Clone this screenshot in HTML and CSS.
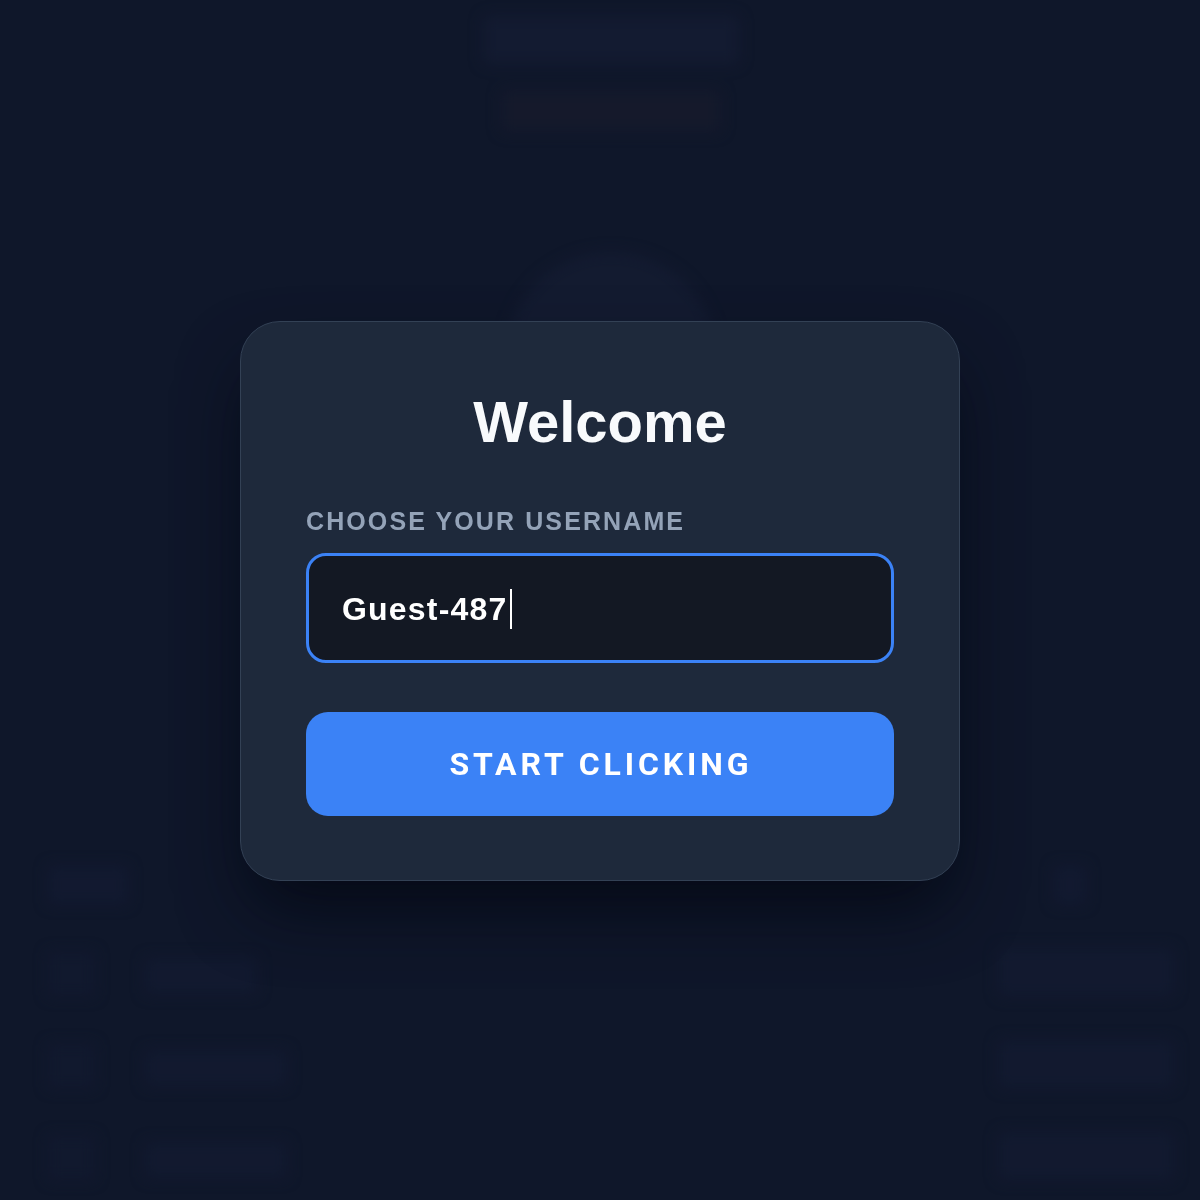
FILE: index.html
```html
<!DOCTYPE html>
<html lang="en">
<head>
<meta charset="utf-8">
<title>Welcome</title>
<link rel="stylesheet" href="styles.css">
</head>
<body>
  <div class="app" aria-hidden="true">
    <header class="app-header">
      <div class="bg-title"></div>
      <div class="bg-score"></div>
      <div class="bg-orb"></div>
    </header>
    <section class="bg-panels">
      <div class="panel panel-left">
        <div class="panel-head"></div>
        <div class="row"><div class="box"></div><div class="bar"></div></div>
        <div class="row"><div class="box"></div><div class="bar wide"></div></div>
        <div class="row"><div class="box"></div><div class="bar wide"></div></div>
      </div>
      <div class="panel panel-right">
        <div class="panel-head small"></div>
        <div class="rbar"></div>
        <div class="rbar"></div>
        <div class="rbar"></div>
      </div>
    </section>
  </div>

  <div class="overlay">
    <div class="card">
      <h1 class="title">Welcome</h1>
      <label class="label" for="username">CHOOSE YOUR USERNAME</label>
      <div class="field" id="username" role="textbox"><span class="value">Guest-487</span><span class="caret"></span></div>
      <button class="start" type="button">START CLICKING</button>
    </div>
  </div>
</body>
</html>
```
FILE: styles.css
```css
* { box-sizing: border-box; }

html, body {
  margin: 0;
  height: 100%;
}

body {
  background: #0f172a;
  font-family: "Liberation Sans", Arial, sans-serif;
  overflow: hidden;
}

/* blurred game layer behind the dialog */
.app {
  height: 100vh;
  display: flex;
  flex-direction: column;
  padding: 16px 26px 20px 48px;
  filter: blur(7px);
}

.app-header {
  display: flex;
  flex-direction: column;
  align-items: center;
}

.bg-title {
  width: 256px;
  height: 48px;
  background: #151d34;
  border-radius: 6px;
}

.bg-score {
  width: 220px;
  height: 42px;
  margin-top: 26px;
  background: #171b2c;
  border-radius: 6px;
}

.bg-orb {
  width: 210px;
  height: 210px;
  margin-top: 120px;
  border-radius: 50%;
  background: #151d33;
}

.bg-panels {
  margin-top: auto;
  display: flex;
  justify-content: space-between;
}

.panel {
  display: flex;
  flex-direction: column;
}

.panel-left { width: 242px; gap: 48px; }

.panel-head {
  width: 80px;
  height: 38px;
  background: #131b33;
  border-radius: 4px;
}

.panel-head.small {
  width: 32px;
  margin-left: 56px;
}

.row {
  display: flex;
  gap: 50px;
  height: 44px;
}

.box {
  width: 47px;
  height: 44px;
  background: #121a30;
  border-radius: 4px;
}

.bar {
  width: 112px;
  height: 36px;
  margin-top: 6px;
  background: #131b32;
  border-radius: 4px;
}

.bar.wide { width: 142px; }

.panel-right { width: 176px; gap: 44px; }

.rbar {
  width: 176px;
  height: 48px;
  background: #131b32;
  border-radius: 6px;
}

/* dialog overlay */
.overlay {
  position: fixed;
  inset: 0;
  display: flex;
  align-items: center;
  justify-content: center;
  background: rgba(15, 23, 42, 0.3);
}

.card {
  width: 720px;
  padding: 64px 65px;
  background: #1e293b;
  border: 1px solid #334155;
  border-radius: 40px;
  box-shadow: 0 36px 70px -12px rgba(2, 6, 16, 0.8);
  display: flex;
  flex-direction: column;
  margin-top: 2px;
}

.title {
  margin: 0 0 48px;
  text-align: center;
  font-size: 58px;
  line-height: 1.25;
  font-weight: 700;
  color: #f8fafc;
}

.label {
  display: block;
  font-size: 25px;
  line-height: 30px;
  font-weight: 700;
  letter-spacing: 2.1px;
  color: #94a3b8;
  margin-bottom: 17px;
}

.field {
  height: 110px;
  border: 3px solid #3b82f6;
  border-radius: 20px;
  background: #131823;
  padding: 2px 33px 0;
  display: flex;
  align-items: center;
  color: #ffffff;
  font-size: 32px;
  font-weight: 700;
  letter-spacing: 1.2px;
}

.caret {
  width: 2px;
  height: 40px;
  background: #ffffff;
  margin-left: 2px;
}

.start {
  margin-top: 49px;
  height: 104px;
  border: 0;
  border-radius: 22px;
  background: #3b82f6;
  color: #ffffff;
  font-family: Roboto, "Liberation Sans", sans-serif;
  font-size: 32px;
  font-weight: 700;
  letter-spacing: 3.9px;
  padding: 0 0 0 2px;
  cursor: pointer;
}
```
